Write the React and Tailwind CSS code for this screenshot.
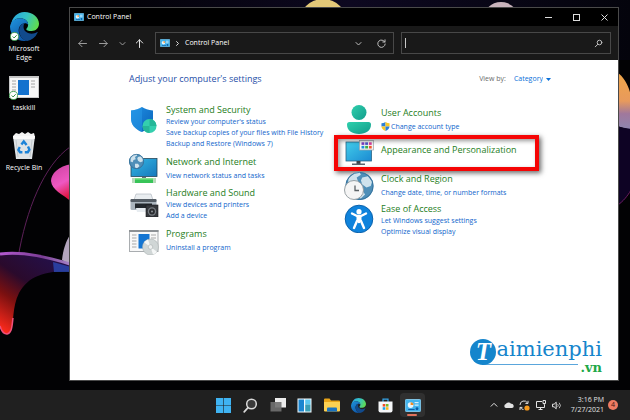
import React, { useState } from 'react';

/* ================= WALLPAPER ================= */
const Wallpaper = () => (
  <svg
    className="absolute inset-0 w-full h-full"
    viewBox="0 0 630 420"
    preserveAspectRatio="xMidYMid slice"
    aria-hidden="true"
  >
    <defs>
      <linearGradient id="ribbon" x1="0.7" y1="0" x2="0.1" y2="1">
        <stop offset="0" stopColor="#24104a" />
        <stop offset="0.4" stopColor="#2a0a2c" />
        <stop offset="0.65" stopColor="#7a1010" />
        <stop offset="1" stopColor="#ff2a1c" />
      </linearGradient>
      <linearGradient id="edgeLine" x1="0" y1="0" x2="1" y2="0">
        <stop offset="0" stopColor="#b45ad0" />
        <stop offset="0.6" stopColor="#7a3c94" />
        <stop offset="1" stopColor="#a784c8" />
      </linearGradient>
      <linearGradient id="petal" x1="0" y1="0" x2="0.3" y2="1">
        <stop offset="0" stopColor="#c9419f" />
        <stop offset="0.6" stopColor="#ee58c2" />
        <stop offset="1" stopColor="#e01846" />
      </linearGradient>
      <linearGradient id="sunset" x1="0" y1="0" x2="0" y2="1">
        <stop offset="0" stopColor="#f0a648" />
        <stop offset="0.5" stopColor="#e89a5c" />
        <stop offset="0.72" stopColor="#a0789c" />
        <stop offset="1" stopColor="#8d86b0" />
      </linearGradient>
      <linearGradient id="skyTop" x1="0" y1="0" x2="1" y2="0">
        <stop offset="0" stopColor="#010103" />
        <stop offset="0.5" stopColor="#0d0820" />
        <stop offset="1" stopColor="#04040c" />
      </linearGradient>
    </defs>
    <rect width="630" height="420" fill="#020204" />
    <rect x="70" width="560" height="60" fill="url(#skyTop)" />
    <circle cx="323" cy="23" r="24" fill="#e3c878" />
    <circle cx="501" cy="20" r="18" fill="#c9b4bc" />
    <path d="M70 147C44 165 26 210 18 258" fill="none" stroke="#5c2058" strokeWidth="1" />
    <path d="M72 164C58 166 51 174 51 181c1 9 11 13 21 21z" fill="url(#petal)" />
    <path d="M72 232c-6 8-9 18-10 28l10 6z" fill="#b3a5bd" />
    <path
      d="M0 254c25-3 50 4 70 10v7c-25 0-42 5-51 22-7 14-5 30-8 38-3 6-9 3-11-5z"
      fill="url(#ribbon)"
    />
    <path d="M53 262l18 5v5H54z" fill="#2c48b4" opacity="0.8" />
    <path d="M0 254c25-3 50 4 70 10" fill="none" stroke="url(#edgeLine)" strokeWidth="3" />
    <path d="M13 318c-1 8-1 15-6 16-4 0-6-4-7-8" fill="none" stroke="#f0507c" strokeWidth="1.5" />
    <path d="M617 72c8 6 13 16 14 26v32c-5-2-9-2-14-4z" fill="url(#sunset)" />
    <path d="M617 126c5 2 9 2 14 3v60c-3 8-8 13-14 17z" fill="#0e0324" />
    <path d="M631 190c-4 7-8 11-13 15" fill="none" stroke="#6d1c5c" strokeWidth="1" />
  </svg>
);

/* ================= ICONS ================= */
const EdgeIcon = ({ className }) => (
  <svg className={className} viewBox="0 0 32 32" aria-hidden="true">
    <defs>
      <linearGradient id="edgeTop" x1="0" y1="0.3" x2="1" y2="0.6">
        <stop offset="0" stopColor="#2aa7e0" />
        <stop offset="0.5" stopColor="#35c3c4" />
        <stop offset="1" stopColor="#62dc4a" />
      </linearGradient>
      <linearGradient id="edgeLeft" x1="0" y1="0" x2="0.6" y2="1">
        <stop offset="0" stopColor="#1f95de" />
        <stop offset="1" stopColor="#0f58a8" />
      </linearGradient>
    </defs>
    <path
      d="M1 15C2 6 8 0 16 0c9 0 16 6 16 13 0 5-4 8-8 8-4 0-6-1-6-2 0-1 2-2 2-5 0-4-4-7-9-7C6 7 2 11 1 15z"
      fill="url(#edgeTop)"
    />
    <path
      d="M0 16C1 11 5 7 11 7c5 0 9 3 9 7-2-2-4-2-6-1-4 2-5 6-4 10 1 5 5 8 9 9-1 0-2 0-3 0C7 32 0 25 0 16z"
      fill="url(#edgeLeft)"
    />
    <path
      d="M10 20c0-4 2-7 6-8-2 4-1 8 2 10 4 3 9 2 12 0 .6 0 .6.4.4.8C28 28 24 31 19 32c-5-1-9-6-9-12z"
      fill="#114a8b"
    />
  </svg>
);

const CheckBadge = () => (
  <svg className="absolute bottom-0 left-0 size-[9px]" viewBox="0 0 10 10" aria-hidden="true">
    <circle cx="5" cy="5" r="4.5" fill="#fff" stroke="#3b9a4c" />
    <path d="M3 5l1.6 1.6L7.4 3.6" fill="none" stroke="#2d8a3e" strokeWidth="1.1" />
  </svg>
);

const ExeIcon = () => (
  <svg className="w-[30px] h-[24px]" viewBox="0 0 30 24" aria-hidden="true">
    <rect x="0.5" y="0.5" width="29" height="21" fill="#f7f7f7" stroke="#c9c9c9" />
    <rect width="30" height="2" fill="#c4c4c4" />
    <rect x="9" y="4" width="11" height="15" fill="#1372ce" />
    <path d="M3 5h4M3 8h4M3 11h4M3 14h4M22 5h4M22 8h4M22 11h4" stroke="#a4a4a4" />
  </svg>
);

const BinIcon = () => (
  <svg className="w-[24px] h-[28px]" viewBox="0 0 24 28" aria-hidden="true">
    <path d="M1 4l3-3 3 1 3-2 3 2 3-2 3 2 3-1 1 4-2 3H3z" fill="#f3f3f3" />
    <path d="M1 4h22l-3 23H4z" fill="#dfe3e6" />
    <path d="M1 4h22l-.4 3H1.4z" fill="#fafafa" />
    <path d="M4 8l2 17M20 8l-2 17" stroke="#c3c9ce" />
    <g fill="none" stroke="#1c83d8" strokeWidth="2.4">
      <path d="M9.4 12.6l2.4-3.1 2.8 3.4" />
      <path d="M16 14.6l1.4 3-1.6 2.6h-3" />
      <path d="M10.4 20.2H8l-1.6-2.4 1.4-2.8" />
    </g>
  </svg>
);

const PanelIcon = ({ className }) => (
  <svg className={className} viewBox="0 0 20 16" aria-hidden="true">
    <rect x="0.5" y="0.5" width="19" height="15" rx="1" fill="#43b4ee" stroke="#8fd6f8" />
    <circle cx="7" cy="7.5" r="3.6" fill="#e9f6fd" />
    <path d="M7 7.5V3.9a3.6 3.6 0 013.6 3.6z" fill="#f08a24" />
    <path d="M12 4.5h5M12 7.5h5" stroke="#fff" strokeWidth="1.2" />
    <path d="M4 13h8" stroke="#0d5ca4" strokeWidth="1.4" />
    <circle cx="15" cy="12" r="1.8" fill="#0d5ca4" />
  </svg>
);

const SecurityIcon = () => (
  <svg viewBox="0 0 30 30" className="size-[30px]" aria-hidden="true">
    <defs>
      <linearGradient id="shield" x1="0" y1="0" x2="1" y2="1">
        <stop offset="0" stopColor="#1f8fe4" />
        <stop offset="1" stopColor="#0a62b8" />
      </linearGradient>
    </defs>
    <path
      d="M13 3c3 2 6 3 11 3.4v8c0 6-4 10.500-11 13.600C6 25 2 20.500 2 14.400v-8C7 6 10 5 13 3z"
      fill="url(#shield)"
    />
    <path d="M13 3v25C6 25 2 20.500 2 14.400v-8C7 6 10 5 13 3z" fill="#2a9bea" opacity="0.5" />
    <circle cx="20.5" cy="22" r="7" fill="#34cfae" />
    <path d="M20.500 15v7h7a7 7 0 00-7-7zM13.500 22h7v7a7 7 0 01-7-7z" fill="#25b798" />
  </svg>
);

const GlobeShape = ({ cx, cy, r }) => (
  <g>
    <circle cx={cx} cy={cy} r={r} fill="#4f8fb8" />
    <g transform={`translate(${cx} ${cy}) scale(${r / 10})`} fill="#cfe2ec">
      <path d="M-8-5c2-3 5-5 8-5l1 2-3 2 1 3-3 1-1 3-3-1z" />
      <path d="M2-6l4-1 3 4-1 3-3 1-3-2-1-3zM-2 3l4 0 2 3-3 3-3-1z" />
    </g>
    <circle cx={cx} cy={cy} r={r - 0.4} fill="none" stroke="#2f6a94" strokeWidth="0.8" />
  </g>
);

const NetworkIcon = () => (
  <svg viewBox="0 0 30 30" className="size-[30px]" aria-hidden="true">
    <defs>
      <linearGradient id="netScreen" x1="0" y1="0" x2="1" y2="1">
        <stop offset="0" stopColor="#35b8e4" />
        <stop offset="1" stopColor="#1578bc" />
      </linearGradient>
    </defs>
    <rect x="2" y="5.5" width="26" height="18" fill="url(#netScreen)" stroke="#27485a" strokeWidth="0.8" />
    <path d="M13 24h4v2h-4z" fill="#68727a" />
    <rect x="3" y="25" width="24" height="5" fill="#38c458" />
    <rect x="3" y="25" width="24" height="1.5" fill="#86e38e" />
    <rect x="3" y="25" width="3" height="5" fill="#b8dcbc" />
    <rect x="24" y="25" width="3" height="5" fill="#b8dcbc" />
    <GlobeShape cx={7.5} cy={8.5} r={7.5} />
  </svg>
);

const HardwareIcon = () => (
  <svg viewBox="0 0 30 30" className="size-[30px]" aria-hidden="true">
    <path d="M7 7h15l2 6H5z" fill="#e9edf0" stroke="#a7b0b8" strokeWidth="0.6" />
    <rect x="1.5" y="12" width="26" height="11" rx="1.5" fill="#aab4bd" />
    <rect x="1.5" y="12" width="26" height="3" rx="1" fill="#545c64" />
    <rect x="6" y="16.5" width="17" height="5" fill="#23282d" />
    <path d="M7 21h14v4H8z" fill="#e8edf1" />
    <rect x="17" y="18" width="12" height="12" fill="#35383c" stroke="#1b1d1f" strokeWidth="0.6" />
    <circle cx="23" cy="24.5" r="4.2" fill="#777c82" />
    <circle cx="23" cy="24.5" r="2.9" fill="#2a2c2f" />
    <circle cx="23" cy="24.5" r="1" fill="#90959a" />
  </svg>
);

const ProgramsIcon = () => (
  <svg viewBox="0 0 30 30" className="size-[30px]" aria-hidden="true">
    <rect x="0.5" y="5.5" width="28.5" height="21" fill="#f8f8f8" stroke="#a9adb0" />
    <rect x="0" y="5" width="29.5" height="2" fill="#8d9195" />
    <rect x="9.5" y="9" width="11" height="14.5" fill="#1475d2" />
    <path d="M3 10h4.500M3 13h4.500M3 16h4.500M3 19h4.500M3 22h4.500M22 10h5M22 13h5" stroke="#a8a8a8" />
    <circle cx="21.5" cy="22" r="8" fill="#d0d6d6" stroke="#a5acac" strokeWidth="0.5" />
    <path d="M21.500 22L15 17.300a8 8 0 014-2.900zM21.500 22l6.500 4.700a8 8 0 01-4 2.900z" fill="#f5f7f7" />
    <circle cx="21.5" cy="22" r="2.3" fill="#eef0f0" stroke="#a9b0b0" strokeWidth="0.6" />
  </svg>
);

const UserIcon = () => (
  <svg viewBox="0 0 30 30" className="size-[30px]" aria-hidden="true">
    <defs>
      <linearGradient id="user" x1="0" y1="0" x2="1" y2="1">
        <stop offset="0" stopColor="#2fd0ac" />
        <stop offset="1" stopColor="#129c8c" />
      </linearGradient>
    </defs>
    <circle cx="15" cy="8.5" r="7.5" fill="url(#user)" />
    <path
      d="M5.500 18h19a2.500 2.500 0 012.500 2.500c0 6-5 9.500-12 9.500S3 26.500 3 20.500A2.500 2.500 0 015.500 18z"
      fill="url(#user)"
    />
  </svg>
);

const AppearanceIcon = () => (
  <svg viewBox="0 0 30 30" className="size-[30px]" aria-hidden="true">
    <defs>
      <linearGradient id="appScreen" x1="0" y1="0" x2="1" y2="1">
        <stop offset="0" stopColor="#42cdea" />
        <stop offset="1" stopColor="#1b8ad2" />
      </linearGradient>
    </defs>
    <rect x="2" y="5" width="25.5" height="19" fill="url(#appScreen)" stroke="#2b6587" strokeWidth="0.8" />
    <path d="M12.500 24h4v3h-4z" fill="#39444c" />
    <rect x="8" y="26.5" width="13" height="1.5" fill="#59656e" />
    <rect x="15.5" y="3.5" width="14" height="9.5" fill="#f4f4f4" stroke="#9aa3a9" strokeWidth="0.7" />
    <rect x="17.5" y="5.3" width="2.8" height="2.6" fill="#7c3cc0" />
    <rect x="21.2" y="5.3" width="2.8" height="2.6" fill="#4d55c8" />
    <rect x="24.9" y="5.3" width="2.8" height="2.6" fill="#d83b9c" />
    <rect x="17.5" y="8.9" width="2.8" height="2.6" fill="#1c8ee0" />
    <rect x="21.2" y="8.9" width="2.8" height="2.6" fill="#3bb04a" />
    <rect x="24.9" y="8.9" width="2.8" height="2.6" fill="#f0572c" />
  </svg>
);

const ClockIcon = () => (
  <svg viewBox="0 0 30 30" className="size-[30px]" aria-hidden="true">
    <GlobeShape cx={15.5} cy={16} r={14} />
    <circle cx="10" cy="20" r="9.5" fill="#f5f5f5" stroke="#8f979c" strokeWidth="0.9" />
    <path d="M11 15.500v5h4" fill="none" stroke="#5c6266" strokeWidth="1.3" />
  </svg>
);

const EaseIcon = () => (
  <svg viewBox="0 0 30 30" className="size-[30px]" aria-hidden="true">
    <circle cx="15" cy="16" r="13.8" fill="#0f83dc" stroke="#0b62ac" />
    <circle cx="15" cy="8.7" r="2.6" fill="#fff" />
    <path
      d="M8 10.500l5 2.500h4l5-2.500M15 13v6M13 18l-3 7M17 18l3 7"
      fill="none"
      stroke="#fff"
      strokeWidth="2.4"
      strokeLinecap="round"
      strokeLinejoin="round"
    />
    <path d="M12.500 12.500h5v6.500h-5z" fill="#fff" />
  </svg>
);

const UacShield = () => (
  <svg viewBox="0 0 10 10" className="size-[9px] shrink-0" aria-hidden="true">
    <path d="M5 0C3.500 1 2 1.400.5 1.500V5H5z" fill="#2a7fd8" />
    <path d="M5 0c1.500 1 3 1.400 4.500 1.500V5H5z" fill="#f8c828" />
    <path d="M.5 5c.3 2.500 2 4 4.500 5V5z" fill="#f8c828" />
    <path d="M9.500 5C9.200 7.500 7.500 9 5 10V5z" fill="#2a7fd8" />
  </svg>
);

/* ================= DATA ================= */
const leftCategories = [
  {
    title: 'System and Security',
    Icon: SecurityIcon,
    links: [
      "Review your computer's status",
      'Save backup copies of your files with File History',
      'Backup and Restore (Windows 7)',
    ],
  },
  { title: 'Network and Internet', Icon: NetworkIcon, links: ['View network status and tasks'] },
  {
    title: 'Hardware and Sound',
    Icon: HardwareIcon,
    links: ['View devices and printers', 'Add a device'],
  },
  { title: 'Programs', Icon: ProgramsIcon, links: ['Uninstall a program'] },
];

const rightCategories = [
  { title: 'User Accounts', Icon: UserIcon, links: ['Change account type'], shield: true },
  { title: 'Appearance and Personalization', Icon: AppearanceIcon, links: [], marked: true },
  { title: 'Clock and Region', Icon: ClockIcon, links: ['Change date, time, or number formats'] },
  {
    title: 'Ease of Access',
    Icon: EaseIcon,
    links: ['Let Windows suggest settings', 'Optimize visual display'],
  },
];

const Category = ({ title, Icon, links, shield, marked }) => (
  <li className="relative flex gap-[7px]">
    <span className="shrink-0">
      <Icon />
    </span>
    <div
      className={`flex flex-col justify-center whitespace-nowrap ${links.length === 1 ? 'gap-0.5' : ''} ${marked ? 'pb-1' : ''}`}
    >
      <a href="#" className="text-[9px] leading-[12px] text-[#1e7d22] hover:underline">
        {title}
      </a>
      {links.map((link) => (
        <a
          key={link}
          href="#"
          className="flex items-center gap-px text-[7px] leading-[11px] text-[#1066cc] hover:underline"
        >
          {shield && <UacShield />}
          {link}
        </a>
      ))}
    </div>
    {marked && (
      <span className="absolute -left-[10px] right-5 -top-0.5 -bottom-1 border-4 border-[#f50505] pointer-events-none shadow-[2px_2px_5px_rgba(0,0,0,0.6),inset_2px_2px_4px_rgba(0,0,0,0.4)]" />
    )}
  </li>
);

/* ================= WINDOW ================= */
const TitleBar = () => (
  <div className="flex items-center h-[18px] bg-black text-white">
    <PanelIcon className="w-[10px] h-[8px] ml-1" />
    <h1 className="flex-1 ml-[3px] text-[7px]">Control Panel</h1>
    <button aria-label="Minimize" className="w-7 h-full grid place-items-center">
      <svg className="size-[7px]" viewBox="0 0 7 7">
        <path d="M0 3.500h7" stroke="#ddd" />
      </svg>
    </button>
    <button aria-label="Maximize" className="w-7 h-full grid place-items-center">
      <svg className="size-[7px]" viewBox="0 0 7 7">
        <rect x="0.5" y="0.5" width="6" height="6" fill="none" stroke="#ddd" />
      </svg>
    </button>
    <button aria-label="Close" className="w-7 h-full grid place-items-center">
      <svg className="size-[7px]" viewBox="0 0 7 7">
        <path d="M.5.5l6 6M6.500.5l-6 6" stroke="#ddd" />
      </svg>
    </button>
  </div>
);

const NavButton = ({ label, className, children }) => (
  <button aria-label={label} className={`grid place-items-center h-5 ${className}`}>
    <svg
      className="size-[9px]"
      viewBox="0 0 9 9"
      fill="none"
      stroke="currentColor"
      strokeLinecap="round"
      strokeLinejoin="round"
    >
      {children}
    </svg>
  </button>
);

const Toolbar = () => {
  const [query, setQuery] = useState('');
  return (
    <div className="flex items-center gap-[7px] h-[34px] pr-[7px] bg-[#191919] text-[#9b9b9b]">
      <div className="flex items-center pl-0.5">
        <NavButton label="Back" className="w-[21px]">
          <path d="M8.500 4.500H.8M4 1.300L.8 4.500 4 7.700" />
        </NavButton>
        <NavButton label="Forward" className="w-[21px]">
          <path d="M.5 4.500h7.700M5 1.300l3.200 3.200L5 7.700" />
        </NavButton>
        <NavButton label="Recent locations" className="w-4">
          <path d="M2 3.500l2.500 2.500L7 3.500" />
        </NavButton>
        <NavButton label="Up" className="w-[18px] text-[#e4e4e4]">
          <path d="M4.500 8.500V.8M1.300 4l3.200-3.200L7.700 4" />
        </NavButton>
      </div>
      <div className="flex flex-[8_1_0%] items-center h-[22px] border border-[#484848] text-white">
        <PanelIcon className="w-[10px] h-[8px] ml-1" />
        <svg className="size-[5px] mx-[5px]" viewBox="0 0 5 5" aria-hidden="true">
          <path d="M1.300.3l2.200 2.200-2.200 2.200" fill="none" stroke="#ddd" />
        </svg>
        <span className="flex-1 text-[7px]">Control Panel</span>
        <NavButton label="Previous locations" className="w-[22px] text-[#bdbdbd]">
          <path d="M2 3.500l2.500 2.500L7 3.500" />
        </NavButton>
        <NavButton label="Refresh" className="w-[24px] text-[#bdbdbd]">
          <path d="M7.800 3A3.700 3.700 0 108.200 5M8 .8V3H5.800" />
        </NavButton>
      </div>
      <div className="flex flex-[7_1_0%] items-center h-[22px] border border-[#484848] text-white">
        <span className="w-px h-[10px] ml-[3px] bg-[#c8c8c8]" />
        <input
          type="search"
          aria-label="Search Control Panel"
          value={query}
          onChange={(e) => setQuery(e.target.value)}
          className="flex-1 min-w-0 h-full bg-transparent text-[7px] outline-none"
        />
        <NavButton label="Search" className="w-[24px] text-[#bdbdbd]">
          <circle cx="5.5" cy="3.5" r="2.3" />
          <path d="M3.800 5.300L1.300 7.800" />
        </NavButton>
      </div>
    </div>
  );
};

const ViewBy = () => {
  const [view, setView] = useState('Category');
  return (
    <div className="flex items-center pr-2 text-[7px] leading-[12px]">
      <label htmlFor="view" className="text-[#6a6a6a] mr-2">
        View by:
      </label>
      <select
        id="view"
        value={view}
        onChange={(e) => setView(e.target.value)}
        className="appearance-none field-sizing-content bg-transparent text-[#0a6fd8] outline-none"
      >
        <option>Category</option>
        <option>Large icons</option>
        <option>Small icons</option>
      </select>
      <svg className="w-[5px] h-[3px] ml-[3px]" viewBox="0 0 5 3" aria-hidden="true">
        <path d="M0 0h5L2.500 3z" fill="#0a6fd8" />
      </svg>
    </div>
  );
};

const Watermark = () => (
  <div className="absolute right-4 bottom-[7px] flex items-start font-['DejaVu_Serif',serif]">
    <span className="z-10 mt-0.5 grid place-items-center size-[26px] rounded-full bg-[#1585cc] font-['Liberation_Serif',serif] text-[25px] leading-[26px] font-bold italic text-white">
      T
    </span>
    <div className="flex flex-col items-end">
      <span className="text-[21px] leading-[25px] text-[#1585cc]">aimienphi</span>
      <span className="text-[13px] leading-[11px] font-bold text-[#20a846]">.vn</span>
    </div>
    <span className="absolute left-3 right-6 top-[27px] h-px bg-[#5aa6dc]" />
  </div>
);

const ControlPanelWindow = () => (
  <section className="relative flex flex-col flex-1 min-w-0 mt-[7px] mb-[9px] mr-[11px] border border-[#4a4a4a] bg-white">
    <TitleBar />
    <Toolbar />
    <main className="flex-1 px-[59px] pt-3">
      <div className="flex items-center justify-between">
        <h2 className="text-[9px] leading-[14px] text-[#1f4fa8]">Adjust your computer's settings</h2>
        <ViewBy />
      </div>
      <div className="grid grid-cols-2 mt-[18px]">
        <ul className="flex flex-col gap-1">
          {leftCategories.map((c) => (
            <Category key={c.title} {...c} />
          ))}
        </ul>
        <ul className="flex flex-col gap-[3px]">
          {rightCategories.map((c) => (
            <Category key={c.title} {...c} />
          ))}
        </ul>
      </div>
    </main>
    <Watermark />
  </section>
);

/* ================= DESKTOP ================= */
const Shortcut = ({ label, className, badge, children }) => (
  <button className={`flex flex-col items-center w-full text-[7px] leading-[9px] text-white ${className}`}>
    <span className="relative mb-[3px]">
      {children}
      {badge && <CheckBadge />}
    </span>
    {label}
  </button>
);

const DesktopIcons = () => (
  <div className="w-[69px] shrink-0 pr-[21px] pt-3">
    <Shortcut label={<span className="w-10">Microsoft Edge</span>} badge className="mb-[14px]">
      <EdgeIcon className="size-[29px]" />
    </Shortcut>
    <Shortcut label="taskkill" badge className="mb-5">
      <ExeIcon />
    </Shortcut>
    <Shortcut label={<span className="whitespace-nowrap">Recycle Bin</span>} className="">
      <BinIcon />
    </Shortcut>
  </div>
);

/* ================= TASKBAR ================= */
const taskbarApps = [
  {
    name: 'Start',
    icon: (
      <svg className="size-[15px]" viewBox="0 0 15 15">
        <path d="M0 0h7.200v7.200H0zM7.800 0H15v7.200H7.800zM0 7.800h7.200V15H0zM7.800 7.800H15V15H7.800z" fill="#3fb3f2" />
      </svg>
    ),
  },
  {
    name: 'Search',
    icon: (
      <svg className="size-[15px]" viewBox="0 0 15 15" fill="none">
        <circle cx="8.5" cy="6" r="4.8" fill="#3a3a3a" stroke="#dadada" strokeWidth="1.5" />
        <path d="M5 9.700L1.200 13.800" stroke="#dadada" strokeWidth="1.7" strokeLinecap="round" />
      </svg>
    ),
  },
  {
    name: 'Task View',
    icon: (
      <svg className="size-[16px]" viewBox="0 0 16 16">
        <rect x="5" y="1" width="11" height="9.5" fill="#ececec" />
        <rect x="0.5" y="5" width="11" height="9.5" fill="#707070" opacity="0.9" />
      </svg>
    ),
  },
  {
    name: 'Widgets',
    icon: (
      <svg className="size-[15px]" viewBox="0 0 15 15">
        <rect x="0.5" y="0.5" width="14" height="14" fill="#f2fafe" />
        <rect x="1.5" y="1.5" width="5.5" height="12" fill="#1b86d0" />
        <rect x="8.2" y="1.5" width="5.3" height="5" fill="#5cc8f0" />
        <rect x="8.2" y="6.5" width="5.3" height="7" fill="#3aa0b8" />
      </svg>
    ),
  },
  {
    name: 'File Explorer',
    icon: (
      <svg className="w-[16px] h-[14px]" viewBox="0 0 16 14">
        <path d="M0 1.500A1 1 0 011 .5h4.500L7 2.500h8a1 1 0 011 1V13H0z" fill="#e8a418" />
        <path d="M0 4h16v8.500a1 1 0 01-1 1H1a1 1 0 01-1-1z" fill="#fbd052" />
        <path d="M4 9.500h8a1 1 0 011 1v3H3v-3a1 1 0 011-1z" fill="#1a73c0" />
      </svg>
    ),
  },
  { name: 'Microsoft Edge', icon: <EdgeIcon className="size-[15px]" /> },
  {
    name: 'Microsoft Store',
    icon: (
      <svg className="size-[15px]" viewBox="0 0 15 15">
        <path d="M5 4V1.200h5V4" fill="none" stroke="#35a4e8" strokeWidth="1.2" />
        <path d="M.5 3.500h14v9a2 2 0 01-2 2h-10a2 2 0 01-2-2z" fill="#f4f6f8" />
        <path d="M4.700 6h2.600v2.600H4.700z" fill="#f04f28" />
        <path d="M7.900 6h2.600v2.600H7.900z" fill="#7ab826" />
        <path d="M4.700 9.200h2.600v2.600H4.700z" fill="#1ba0e8" />
        <path d="M7.900 9.200h2.600v2.600H7.900z" fill="#fab818" />
      </svg>
    ),
  },
  { name: 'Control Panel', icon: <PanelIcon className="w-[16px] h-[13px]" />, active: true },
];

const Tray = () => (
  <div className="flex items-center justify-self-end pr-3 text-[#e2e2e2]">
    <button aria-label="Show hidden icons" className="w-[15px] grid place-items-center">
      <svg className="size-[8px]" viewBox="0 0 8 8" fill="none" stroke="currentColor">
        <path d="M.8 5.500L4 2.300l3.200 3.200" />
      </svg>
    </button>
    <button aria-label="OneDrive" className="w-[15px] grid place-items-center">
      <svg className="w-[10px] h-[6px]" viewBox="0 0 10 6" fill="currentColor">
        <path d="M2 6a2 2 0 01-.2-3.900A3 3 0 017 1.800 2.100 2.100 0 018 6z" />
      </svg>
    </button>
    <button aria-label="Windows Update" className="w-[16px] grid place-items-center">
      <svg className="size-[11px]" viewBox="0 0 11 11" fill="none" stroke="currentColor">
        <path d="M1 5a4 4 0 017.500-2M9 .8v2.600H6.400M1 10V7.400h2.400M1.300 7.600A4 4 0 004.500 9.500" />
        <circle cx="8" cy="8" r="2.6" fill="#f79a1c" stroke="none" />
      </svg>
    </button>
    <button aria-label="Network" className="w-[17px] grid place-items-center">
      <svg className="size-[10px]" viewBox="0 0 10 10" fill="none" stroke="currentColor">
        <path d="M6 1.500H.5v6h8V5M4.500 7.500v2M2.500 9.500h4" />
        <path d="M7 .5h2.500v3H7zM8.300 3.500V5" />
      </svg>
    </button>
    <button aria-label="Volume" className="w-[13px] grid place-items-center">
      <svg className="size-[9px]" viewBox="0 0 9 9" fill="none" stroke="currentColor">
        <path d="M.5 3.200h1.600L4.200 1.200v6.600L2.100 5.800H.5z" />
        <path d="M5.700 3.200a2 2 0 010 2.600M7.200 1.800a4 4 0 010 5.400" strokeWidth="0.8" />
      </svg>
    </button>
    <div className="ml-2 mr-1 text-[7px] leading-[10px] text-right whitespace-nowrap">
      <p>3:16 PM</p>
      <p>7/27/2021</p>
    </div>
    <span className="grid place-items-center size-[10px] rounded-full bg-[#ee7b62] text-[7px] leading-[10px] text-[#3a1712]">
      4
    </span>
  </div>
);

const Taskbar = () => (
  <footer className="relative grid grid-cols-[1fr_auto_1fr] items-center h-[30px] bg-[#202020]">
    <nav className="col-start-2 flex pl-1.5">
      {taskbarApps.map((app) => (
        <button
          key={app.name}
          aria-label={app.name}
          className="relative w-[27px] h-[30px] grid place-items-center"
        >
          {app.active && <span className="absolute inset-x-px inset-y-[3px] rounded-sm bg-[#303030]" />}
          <span className="relative">{app.icon}</span>
          {app.active && (
            <span className="absolute bottom-1 left-2 w-[10px] h-0.5 rounded-full bg-[#e2735c]" />
          )}
        </button>
      ))}
    </nav>
    <Tray />
  </footer>
);

const App = () => (
  <div className="relative flex flex-col min-h-screen overflow-hidden bg-black font-['Open_Sans','Noto_Sans',sans-serif]">
    <Wallpaper />
    <div className="relative flex flex-1">
      <DesktopIcons />
      <ControlPanelWindow />
    </div>
    <Taskbar />
  </div>
);

export default App;
